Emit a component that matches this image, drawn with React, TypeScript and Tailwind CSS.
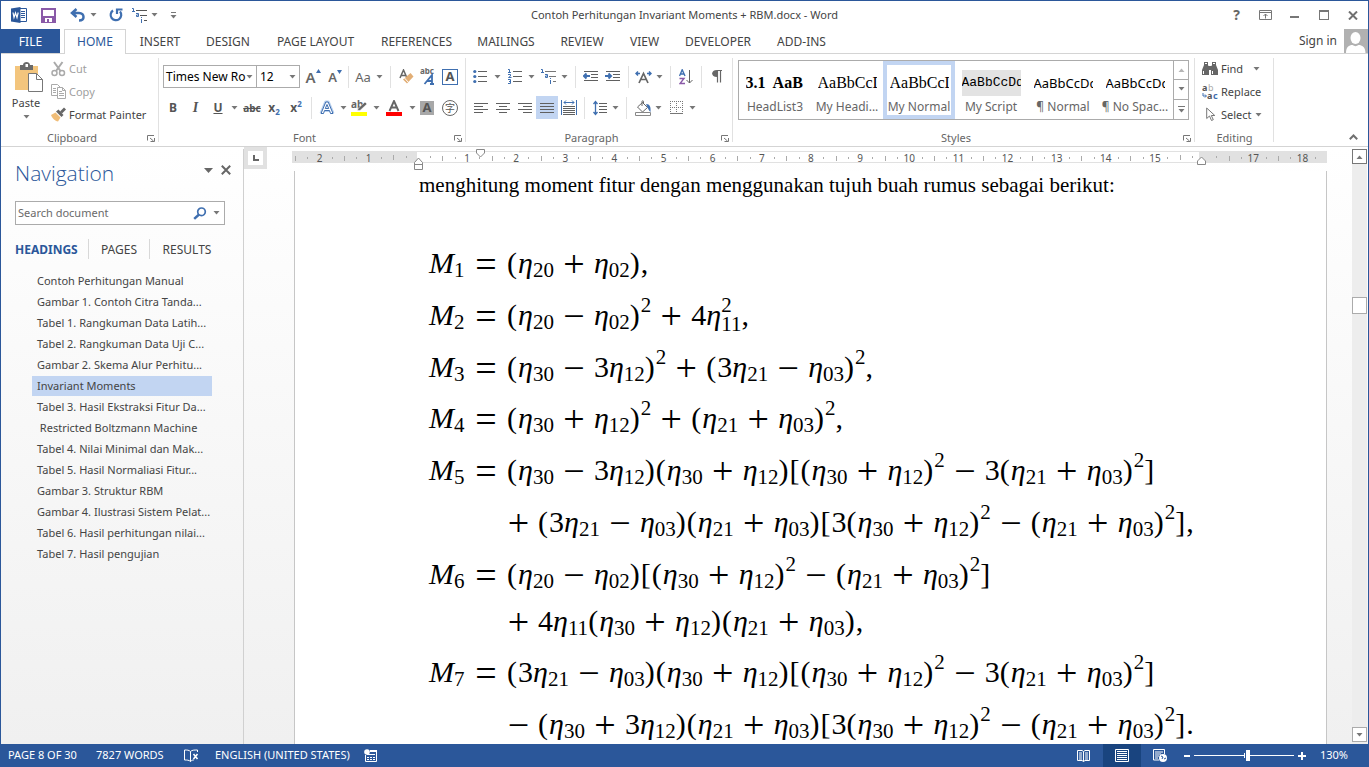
import type { ReactNode } from "react";

const INK = "#606060";
const BLUE = "#3f6fb0";

/* ---------- shared pieces ---------- */

function Caret({ light }: { light?: boolean }) {
  return (
    <svg width="7" height="4" viewBox="0 0 7 4" className="shrink-0">
      <path d="M.5 0h6L3.500 3.500z" fill={light ? "#b5b5b5" : "#777"} />
    </svg>
  );
}

function Tool({ w, label, children, on }: { w: string; label: string; children: ReactNode; on?: boolean }) {
  return (
    <button
      type="button"
      aria-label={label}
      className={`${w} flex h-[23px] shrink-0 items-center justify-center ${on ? "bg-[#c2d5f2]" : ""}`}
    >
      {children}
    </button>
  );
}

function Sep({ w }: { w: string }) {
  return (
    <div className={`${w} flex shrink-0 justify-center`}>
      <div className="h-[22px] w-px bg-[#e1e1e1]" />
    </div>
  );
}

function Launcher({ label }: { label: string }) {
  return (
    <button type="button" aria-label={label} className="absolute right-1 top-[5px]">
      <svg width="8" height="7" viewBox="0 0 8 7" fill="none" stroke="#777">
        <path d="M.5 5.500V.5H7M3 3l3.500 3M7.500 3v3.500H3.500" />
      </svg>
    </button>
  );
}

function Group({ w, label, launcher, children }: { w: string; label: string; launcher?: boolean; children: ReactNode }) {
  return (
    <section aria-label={label} className={`${w} relative flex flex-col pt-1`}>
      <div className="h-[72px]">{children}</div>
      <div className={`relative flex h-4 items-center justify-center text-[#666] ${launcher ? "pr-4" : ""}`}>
        {label}
        {launcher && <Launcher label={`${label} settings`} />}
      </div>
      <div className="absolute right-0 top-1 h-[84px] w-px bg-[#e1e1e1]" />
    </section>
  );
}

/* ---------- icons ---------- */

function Lines({ rows }: { rows: [number, number][] }) {
  return (
    <svg width="15" height="14" viewBox="0 0 15 14" stroke={INK}>
      {rows.map(([a, b], i) => (
        <path key={i} d={`M${a} ${i * 3 + 2.5}H${b}`} />
      ))}
    </svg>
  );
}

function MultiLevel({ dark }: { dark?: boolean }) {
  return (
    <svg width="17" height="17" viewBox="0 0 17 17" fill="none">
      <path d="M5 3.500h11M9 8.500h7M13 13.500h3" stroke={dark ? "#555" : "#777"} />
      <path d="M1 1.500h1.500V4M1 4.500h3M5 6.500h2.500V9.500H5.500V8H7M10.500 10v1M10.500 12v4" stroke={BLUE} />
    </svg>
  );
}

function ClipboardIcon() {
  return (
    <svg width="30" height="31" viewBox="0 0 30 31">
      <rect x="1" y="4" width="23" height="24" fill="#f3c57d" />
      <path d="M6 3h3c0-4 7-4 7 0h3v5H6z" fill="#6a6a6a" />
      <rect x="11.500" y="2" width="2.500" height="3" fill="#fff" />
      <path d="M14.500 11.500h8l6 6v12h-14z" fill="#fff" stroke="#777" />
      <path d="M22.500 11.500v6h6" fill="none" stroke="#777" />
    </svg>
  );
}

function ScissorsIcon() {
  return (
    <svg width="15" height="16" viewBox="0 0 15 16" fill="none" stroke="#aaa" strokeWidth="1.500">
      <path d="M3 1l6.500 9M11.500 1L5 10" strokeWidth="2" />
      <circle cx="3.500" cy="12" r="2.500" />
      <circle cx="11" cy="12" r="2.500" />
    </svg>
  );
}

function CopyIcon() {
  return (
    <svg width="16" height="15" viewBox="0 0 16 15" fill="#fff" stroke="#aaa">
      <path d="M.5.5h6l3 3v8h-9z" />
      <path d="M2 4.500h3M2 6.500h3M2 8.500h3" />
      <path d="M6.500 3.500h5l3 3v8h-8z" />
      <path d="M11.500 3.500v3h3M8 7.500h3M8 9.500h5M8 11.500h5" fill="none" />
    </svg>
  );
}

function BrushIcon() {
  return (
    <svg width="16" height="15" viewBox="0 0 16 15">
      <path d="M0 8l4.500-2.500 5 5L7 14.500C4 14 1 11 0 8z" fill="#f0bd78" />
      <path d="M5 4.500l2.500-2 5 5.500L10.500 10z" fill="#666" />
      <path d="M9 4.500L13 .5l2 2-4 4z" fill="#666" />
    </svg>
  );
}

function LetterIcon({ up }: { up?: boolean }) {
  return (
    <span className={`flex items-start leading-none text-[#666] ${up ? "text-[15px]" : "text-[13px]"}`}>
      <span className="pt-[2px] font-semibold">A</span>
      <svg width="5" height="4" viewBox="0 0 5 4" className="mt-px">
        <path d={up ? "M0 4h5L2.500 0z" : "M0 0h5L2.500 4z"} fill={BLUE} />
      </svg>
    </span>
  );
}

function EraserIcon() {
  return (
    <svg width="15" height="16" viewBox="0 0 15 16">
      <path d="M1 9L4.500 1 8 9M2.500 6.500h4" fill="none" stroke="#666" strokeWidth="1.500" />
      <path d="M11.500 4l3 3.500-6.500 7-4-4z" fill="#e2ae75" />
      <path d="M5.500 9l4 4.500" stroke="#fff" />
    </svg>
  );
}

function OutdentIcon({ right }: { right?: boolean }) {
  return (
    <svg width="16" height="13" viewBox="0 0 16 13" fill="none" stroke={INK}>
      <path d="M1 1.500h14M8 4.500h7M8 7.500h7M1 10.500h14" />
      <path d={right ? "M0 6h6M3.500 3.500L6 6 3.500 8.500" : "M1 6h6M3.500 3.500L1 6l2.500 2.500"} stroke={BLUE} strokeWidth="2" />
    </svg>
  );
}

/* ---------- title bar ---------- */

function TitleBar() {
  return (
    <header className="grid h-7 grid-cols-[1fr_auto_1fr] items-center">
      <div className="flex items-center pl-[10px]">
        <svg width="16" height="16" viewBox="0 0 16 16" aria-label="Word">
          <path d="M8.500 1.500h7v13h-7z" fill="#fff" stroke="#2b579a" />
          <path d="M10 4.500h4M10 6.500h4M10 8.500h4M10 10.500h4" stroke="#2b579a" />
          <path d="M0 1.500L9.500 0v16L0 14.500z" fill="#2b579a" />
          <path d="M2 5.500l1 5 1.500-4.500L6 10.500l1.200-5" fill="none" stroke="#fff" strokeWidth="1.200" />
        </svg>
        <button type="button" aria-label="Save" className="ml-[14px]">
          <svg width="15" height="15" viewBox="0 0 15 15">
            <path d="M1 1h13v13H1z" fill="#fff" stroke="#8a5aa8" strokeWidth="2" />
            <path d="M2 8h11v5H2z" fill="#8a5aa8" />
            <path d="M4 10h7v4H4z" fill="#fff" />
            <path d="M6 11h2v3H6z" fill="#8a5aa8" />
          </svg>
        </button>
        <button type="button" aria-label="Undo" className="ml-[14px] flex items-center gap-[5px]">
          <svg width="15" height="14" viewBox="0 0 15 14" fill="none" stroke={BLUE} strokeWidth="2.500">
            <path d="M6.500 1L2 5l4.500 4M2.500 5h6.500c3 0 4.500 2 4.500 4s-1.500 3.500-4.500 3.500" />
          </svg>
          <Caret />
        </button>
        <button type="button" aria-label="Redo" className="ml-3">
          <svg width="15" height="14" viewBox="0 0 15 14" fill="none" stroke={BLUE} strokeWidth="2.200">
            <path d="M4 2.500A5.300 5.300 0 1 0 11 3.500" />
            <path d="M8 6V1.500h5.500" />
          </svg>
        </button>
        <button type="button" aria-label="Multilevel list" className="ml-[7px] flex items-center gap-[3px]">
          <MultiLevel dark />
          <Caret />
        </button>
        <button type="button" aria-label="Customize toolbar" className="ml-3 flex flex-col items-center gap-[2px]">
          <span className="h-px w-[5px] bg-[#777]" />
          <Caret />
        </button>
      </div>
      <h1 className="text-[#444]">Contoh Perhitungan Invariant Moments + RBM.docx - Word</h1>
      <div className="flex items-center justify-end pr-px">
        <button type="button" aria-label="Help" className="w-[29px] text-[14px] font-bold leading-4 text-[#666]">
          ?
        </button>
        <button type="button" aria-label="Ribbon display options" className="flex w-[29px] justify-center">
          <svg width="13" height="10" viewBox="0 0 13 10" fill="none" stroke="#777">
            <path d="M.5.5h12v9H.5zM1 2.500h11M6.500 8.500V4M4.500 6l2-2 2 2" />
          </svg>
        </button>
        <button type="button" aria-label="Minimize" className="flex w-[29px] justify-center">
          <span className="mt-[3px] h-[2px] w-[9px] bg-[#777]" />
        </button>
        <button type="button" aria-label="Maximize" className="flex w-[29px] justify-center">
          <span className="h-[10px] w-[10px] border border-t-2 border-[#777]" />
        </button>
        <button type="button" aria-label="Close" className="flex w-[29px] justify-center">
          <svg width="10" height="9" viewBox="0 0 10 9" stroke="#707070" strokeWidth="2">
            <path d="M1 .5l8 8M9 .5l-8 8" />
          </svg>
        </button>
      </div>
    </header>
  );
}

/* ---------- ribbon tabs ---------- */

const TABS = [
  { name: "INSERT", w: "w-[68px]" },
  { name: "DESIGN", w: "w-[68px]" },
  { name: "PAGE LAYOUT", w: "w-[107px]" },
  { name: "REFERENCES", w: "w-[95px]" },
  { name: "MAILINGS", w: "w-[84px]" },
  { name: "REVIEW", w: "w-[68px]" },
  { name: "VIEW", w: "w-[57px]" },
  { name: "DEVELOPER", w: "w-[90px]" },
  { name: "ADD-INS", w: "w-[77px]" },
];

function TabStrip() {
  return (
    <nav className="flex h-[25px] border-b border-[#d4d4d4] text-[12px] text-[#444]">
      <button type="button" className="w-[59px] bg-[#2b579a] pt-px text-white">
        FILE
      </button>
      <button type="button" className="-mb-px ml-1 w-[62px] border border-b-0 border-[#d4d4d4] bg-white text-[#2b579a]">
        HOME
      </button>
      {TABS.map((t) => (
        <button key={t.name} type="button" className={`${t.w} whitespace-nowrap pt-px`}>
          {t.name}
        </button>
      ))}
      <div className="ml-auto flex items-center gap-[7px]">
        <a href="#signin">Sign in</a>
        <svg width="24" height="24" viewBox="0 0 24 24" aria-label="Account">
          <rect width="24" height="24" fill="#b1b1b1" />
          <ellipse cx="11.500" cy="9" rx="5" ry="6" fill="#fff" />
          <path d="M2 24c0-6 3-8 6.500-8 2 1.500 4 1.500 6 0 3.500 0 7 2 7 8z" fill="#fff" />
        </svg>
      </div>
    </nav>
  );
}

/* ---------- ribbon groups ---------- */

function ClipboardGroup() {
  return (
    <Group w="w-[158px]" label="Clipboard" launcher>
      <div className="flex">
        <button type="button" className="flex w-[50px] flex-col items-center pt-1 text-[#444]">
          <span className="pl-[5px]"><ClipboardIcon /></span>
          <span className="mt-[2px] leading-4">Paste</span>
          <span className="mt-1">
            <Caret />
          </span>
        </button>
        <div className="flex flex-col">
          <button type="button" className="flex h-[23px] items-center pb-[2px] text-[#a0a0a0]">
            <span className="w-[18px]"><ScissorsIcon /></span>Cut
          </button>
          <button type="button" className="flex h-[23px] items-center pb-[2px] text-[#a0a0a0]">
            <span className="w-[18px]"><CopyIcon /></span>Copy
          </button>
          <button type="button" className="flex h-[23px] items-center whitespace-nowrap pb-[2px] text-[#444]">
            <span className="w-[18px]"><BrushIcon /></span>Format Painter
          </button>
        </div>
      </div>
    </Group>
  );
}

function FontGroup() {
  return (
    <Group w="w-[307px]" label="Font" launcher>
      <div className="flex items-center pl-1 pt-[7px]">
        <button type="button" aria-label="Font name" className="flex h-[23px] w-[94px] items-center justify-between whitespace-nowrap border border-[#ababab] pl-[2px] pr-[3px] text-[12px] text-black">
          Times New Ro
          <Caret />
        </button>
        <button type="button" aria-label="Font size" className="-ml-px flex h-[23px] w-11 items-center justify-between border border-[#ababab] pl-[3px] pr-[3px] text-[12px] text-black">
          12
          <Caret />
        </button>
        <Tool w="w-[26px]" label="Grow font"><LetterIcon up /></Tool>
        <Tool w="w-[18px]" label="Shrink font"><LetterIcon /></Tool>
        <Sep w="w-2" />
        <Tool w="w-[22px]" label="Change case"><span className="text-[13px] text-[#666]">Aa</span></Tool>
        <Tool w="w-[10px]" label="Case options"><Caret /></Tool>
        <Sep w="w-3" />
        <Tool w="w-5" label="Clear formatting"><EraserIcon /></Tool>
        <Tool w="w-[23px]" label="Phonetic guide">
          <svg width="16" height="17" viewBox="0 0 16 17" fontFamily="Noto Sans, sans-serif">
            <text x="0" y="6" fontSize="8" fontWeight="bold" fill="#666">abc</text>
            <path d="M4.500 16L12 7v9M7 13h5M10 16h4" fill="none" stroke={BLUE} strokeWidth="1.800" />
          </svg>
        </Tool>
        <Tool w="w-[22px]" label="Character border">
          <span className="flex h-4 w-4 items-center justify-center border border-[#3f6fb0] text-[13px] font-bold leading-none text-[#555]">A</span>
        </Tool>
      </div>
      <div className="flex items-center pl-1 pt-2 text-[12px] text-[#555]">
        <Tool w="w-5" label="Bold"><b>B</b></Tool>
        <Tool w="w-[25px]" label="Italic"><i className="font-['Liberation_Serif',serif] text-[14px] font-bold">I</i></Tool>
        <Tool w="w-5" label="Underline"><span className="font-bold underline">U</span></Tool>
        <Tool w="w-3" label="Underline options"><Caret /></Tool>
        <Tool w="w-6" label="Strikethrough"><span className="text-[10px] font-bold line-through">abc</span></Tool>
        <Tool w="w-5" label="Subscript"><b>x</b><span className="pt-2 text-[8px] font-bold text-[#3f6fb0]">2</span></Tool>
        <Tool w="w-6" label="Superscript"><b>x</b><span className="pb-2 text-[8px] font-bold text-[#3f6fb0]">2</span></Tool>
        <Sep w="w-[6px]" />
        <Tool w="w-[26px]" label="Text effects">
          <svg width="16" height="16" viewBox="0 0 16 16" fill="none" strokeLinejoin="round">
            <path d="M2.500 13.500L7 2.500h2l4.500 11M5 10h6" stroke="#b9d0ee" strokeWidth="4" />
            <path d="M2 13.500L6.800 2h2.400L14 13.500h-2.500l-1-3h-5l-1 3zM6.300 8.500h3.400L8 4.500z" stroke={BLUE} fill="#fff" />
          </svg>
        </Tool>
        <Tool w="w-[6px]" label="Effect options"><Caret /></Tool>
        <Tool w="w-[26px]" label="Highlight">
          <svg width="17" height="16" viewBox="0 0 17 16">
            <text x="0" y="8" fontSize="10" fontWeight="bold" fill="#666" fontFamily="Noto Sans, sans-serif">ab</text>
            <path d="M14 2l2 2-7 6.500H6.500L7 8.500z" fill="#666" stroke="#fff" strokeWidth=".5" />
            <rect y="12" width="16" height="4" fill="#ff0" />
          </svg>
        </Tool>
        <Tool w="w-2" label="Highlight options"><Caret /></Tool>
        <Tool w="w-7" label="Font color">
          <svg width="16" height="16" viewBox="0 0 16 16">
            <path d="M3.500 11L8 1l4.500 10M5 7.500h6" fill="none" stroke="#666" strokeWidth="1.900" />
            <rect y="12" width="16" height="4" fill="#f00" />
          </svg>
        </Tool>
        <Tool w="w-2" label="Color options"><Caret /></Tool>
        <Tool w="w-[22px]" label="Character shading">
          <span className="flex h-[14px] w-[14px] items-center justify-center bg-[#a8a8a8] text-[13px] font-bold leading-none">A</span>
        </Tool>
        <Tool w="w-6" label="Enclose characters">
          <span className="flex h-4 w-4 items-center justify-center rounded-full border border-[#666] font-['Noto_Sans_CJK_SC',sans-serif] text-[10px] leading-none">字</span>
        </Tool>
      </div>
    </Group>
  );
}

function ParagraphGroup() {
  return (
    <Group w="w-[267px]" label="Paragraph" launcher>
      <div className="flex items-center pl-1 pt-[7px]">
        <Tool w="w-5" label="Bullets">
          <svg width="14" height="15" viewBox="0 0 14 15">
            <path d="M5 2.500h9M5 7.500h9M5 12.500h9" stroke={INK} />
            <g fill={BLUE}><circle cx="1.800" cy="2.500" r="1.600" /><circle cx="1.800" cy="7.500" r="1.600" /><circle cx="1.800" cy="12.500" r="1.600" /></g>
          </svg>
        </Tool>
        <Tool w="w-[14px]" label="Bullet options"><Caret /></Tool>
        <Tool w="w-[22px]" label="Numbering">
          <svg width="15" height="17" viewBox="0 0 15 17" fill="none">
            <path d="M5 3.500h9M5 8.500h9M5 13.500h9" stroke={INK} />
            <path d="M0 1.500h1.500V4M0 4.500h3M0 6.500h2.500v1.500l-2 1.500h3M0 11.500h2.500v4H0M1 13.500h1.500" stroke={BLUE} />
          </svg>
        </Tool>
        <Tool w="w-[10px]" label="Numbering options"><Caret /></Tool>
        <Tool w="w-6" label="Multilevel list"><MultiLevel /></Tool>
        <Tool w="w-2" label="Multilevel options"><Caret /></Tool>
        <Sep w="w-[14px]" />
        <Tool w="w-[18px]" label="Decrease indent"><OutdentIcon /></Tool>
        <Tool w="w-[26px]" label="Increase indent"><OutdentIcon right /></Tool>
        <Sep w="w-1" />
        <Tool w="w-[26px]" label="Asian layout">
          <svg width="17" height="14" viewBox="0 0 17 14" fill="none">
            <path d="M4 13L8.500 3.500 13 13M5.500 9.500h6" stroke="#666" strokeWidth="1.700" />
            <path d="M1 3.500h4M3 1.500l-2 2 2 2M16 3.500h-4M14 1.500l2 2-2 2" stroke={BLUE} strokeWidth="1.500" />
          </svg>
        </Tool>
        <Tool w="w-[6px]" label="Asian layout options"><Caret /></Tool>
        <Sep w="w-4" />
        <Tool w="w-4" label="Sort">
          <svg width="14" height="16" viewBox="0 0 14 16" fill="none">
            <path d="M.5 7L3.200.8 6 7M1.500 5h3.500" stroke={BLUE} strokeWidth="1.400" />
            <path d="M.5 9.500h4.500L1 14.500h5" stroke="#8a5aa8" strokeWidth="1.400" />
            <path d="M10.500 1v13M7.500 11l3 3 3-3" stroke={INK} />
          </svg>
        </Tool>
        <Sep w="w-[14px]" />
        <Tool w="w-[18px]" label="Show marks">
          <svg width="10" height="13" viewBox="0 0 10 13">
            <path d="M5 .5H10M5.500 0v12.500M8.500 0v12.500" stroke="#666" strokeWidth="1.200" />
            <path d="M5 0v7C-1.500 7-1.500 0 5 0z" fill="#666" />
          </svg>
        </Tool>
      </div>
      <div className="flex items-center pl-1 pt-2">
        <Tool w="w-[22px]" label="Align left"><Lines rows={[[0, 14], [0, 9], [0, 14], [0, 9]]} /></Tool>
        <Tool w="w-[22px]" label="Center"><Lines rows={[[0, 14], [3, 11], [0, 14], [3, 11]]} /></Tool>
        <Tool w="w-[22px]" label="Align right"><Lines rows={[[0, 14], [5, 14], [0, 14], [5, 14]]} /></Tool>
        <Tool w="w-[22px]" label="Justify" on><Lines rows={[[0, 14], [0, 14], [0, 14], [0, 14]]} /></Tool>
        <Tool w="w-[22px]" label="Distributed">
          <svg width="16" height="15" viewBox="0 0 16 15" fill="none">
            <path d="M.5 0v15M15.500 0v15M3 2.500h10M5 .5l-2 2 2 2M11 .5l2 2-2 2" stroke={BLUE} />
            <path d="M2 6.500h12M2 8.500h12M2 10.500h12M2 12.500h12M2 14.500h12" stroke={INK} />
          </svg>
        </Tool>
        <Sep w="w-2" />
        <Tool w="w-6" label="Line spacing">
          <svg width="15" height="16" viewBox="0 0 15 16" fill="none">
            <path d="M2.500 1.500v13M.5 4l2-2.500 2 2.500M.5 12l2 2.500 2-2.500" stroke={BLUE} strokeWidth="1.300" />
            <path d="M6 3.500h8M6 6.500h8M6 9.500h8M6 12.500h8" stroke={INK} />
          </svg>
        </Tool>
        <Tool w="w-[6px]" label="Spacing options"><Caret /></Tool>
        <Sep w="w-4" />
        <Tool w="w-[18px]" label="Shading">
          <svg width="17" height="16" viewBox="0 0 17 16" fill="none">
            <path d="M7.500 2.500l5 5-5 4.500-5-5zM7 6V1.500c0-1 1.500-1 1.500 0V4" stroke="#666" fill="#fff" />
            <path d="M11 4c4 0 5 3 4.500 8-1.500-1-2-3-3-4.500z" fill={BLUE} />
            <path d="M.5 12.500h15v3H.5z" fill="#fff" stroke="#888" />
          </svg>
        </Tool>
        <Tool w="w-3" label="Shading options"><Caret /></Tool>
        <Tool w="w-6" label="Borders">
          <svg width="13" height="13" viewBox="0 0 13 13" stroke="#777" fill="none">
            <path d="M0 .5h13M0 6.500h13M.5 0v12M6.500 0v12M12.500 0v12" strokeDasharray="1 1" />
            <path d="M0 12.500h13" />
          </svg>
        </Tool>
        <Tool w="w-2" label="Border options"><Caret /></Tool>
      </div>
    </Group>
  );
}

const STYLES = [
  { name: "HeadList3", sample: "3.1  AaB", cls: "font-['Liberation_Serif',serif] text-[16px] font-bold" },
  { name: "My Headi...", sample: "AaBbCcD", cls: "font-['Liberation_Serif',serif] text-[16px]" },
  { name: "My Normal", sample: "AaBbCcD", cls: "font-['Liberation_Serif',serif] text-[16px]", on: true },
  { name: "My Script", sample: "AaBbCcDd", cls: "font-['Liberation_Mono'] text-[13px] bg-[#e3e3e3]" },
  { name: "¶ Normal", sample: "AaBbCcDd", cls: "text-[13px]" },
  { name: "¶ No Spac...", sample: "AaBbCcDd", cls: "text-[13px]" },
];

function StylesGroup() {
  return (
    <Group w="w-[462px]" label="Styles" launcher>
      <div className="ml-[5px] mr-[6px] mt-[2px] flex h-[60px] border border-[#ababab]">
        {STYLES.map((s) => (
          <button
            key={s.name}
            type="button"
            className={`flex w-[72px] shrink-0 flex-col items-center justify-start border-4 ${s.on ? "border-[#c2d5f2]" : "border-transparent"}`}
          >
            <span className={`mt-[5px] h-[26px] w-[59px] shrink-0 overflow-hidden whitespace-pre text-left leading-[26px] text-black ${s.cls}`}>{s.sample}</span>
            <span className="mt-[3px] whitespace-nowrap text-[12px] leading-4 text-[#666]">{s.name}</span>
          </button>
        ))}
        <div className="ml-auto grid w-[15px] grid-rows-3 divide-y divide-[#ababab] border-l border-[#ababab]">
          <button type="button" aria-label="Previous styles" className="flex items-center justify-center"><span className="rotate-180"><Caret light /></span></button>
          <button type="button" aria-label="Next styles" className="flex items-center justify-center"><Caret /></button>
          <button type="button" aria-label="More styles" className="flex flex-col items-center justify-center gap-[2px]">
            <span className="h-px w-[7px] bg-[#777]" />
            <Caret />
          </button>
        </div>
      </div>
    </Group>
  );
}

function EditingGroup() {
  return (
    <Group w="w-[79px]" label="Editing">
      <div className="flex flex-col pl-[7px] text-[#444]">
        <button type="button" className="flex h-[23px] items-center pb-[2px]">
          <span className="w-[19px]">
            <svg width="16" height="14" viewBox="0 0 16 14" fill="#666">
              <path d="M2 3V0h4v3l1 2v8H0V8zM10 3V0h4v3l2 5v5H9V5zM6.500 4h3v4h-3z" />
              <path d="M1.500 9v3M10.500 9v3M3 1.500h2M11 1.500h2" stroke="#fff" />
            </svg>
          </span>
          Find
          <span className="ml-[10px]"><Caret /></span>
        </button>
        <button type="button" className="flex h-[23px] items-center pb-[2px]">
          <span className="w-[19px]">
            <svg width="17" height="16" viewBox="0 0 17 16" fontFamily="Noto Sans, sans-serif" fontSize="9">
              <text x="0" y="7" fill="#555" fontWeight="bold">a</text>
              <text x="6" y="7" fill="#aaa">b</text>
              <text x="5" y="15" fill="#555" fontWeight="bold">a</text>
              <text x="11" y="15" fill={BLUE} fontWeight="bold">c</text>
              <path d="M1 9v3h3M3 10.500L4.500 12 3 13.500" fill="none" stroke={BLUE} />
            </svg>
          </span>
          Replace
        </button>
        <button type="button" className="flex h-[23px] items-center pb-[2px]">
          <span className="w-[19px] pl-1">
            <svg width="10" height="15" viewBox="0 0 10 15" fill="#fff" stroke="#777">
              <path d="M.7 1v10.500L3.500 9l2 4.500 1.800-.8-2-4.200h3.500z" />
            </svg>
          </span>
          Select
          <span className="ml-[3px]"><Caret /></span>
        </button>
      </div>
    </Group>
  );
}

function Ribbon() {
  return (
    <div className="flex h-[93px] shrink-0 border-b border-[#d4d4d4]">
      <ClipboardGroup />
      <FontGroup />
      <ParagraphGroup />
      <StylesGroup />
      <EditingGroup />
      <button type="button" aria-label="Collapse ribbon" className="mb-1 ml-auto mr-[10px] flex items-end pb-[2px]">
        <svg width="9" height="6" viewBox="0 0 9 6" fill="none" stroke="#707070" strokeWidth="2">
          <path d="M.8 5.200L4.500 1.500l3.700 3.700" />
        </svg>
      </button>
    </div>
  );
}

/* ---------- navigation pane ---------- */

const HEADINGS = [
  "Contoh Perhitungan Manual",
  "Gambar 1. Contoh Citra Tanda...",
  "Tabel 1. Rangkuman Data Latih...",
  "Tabel 2. Rangkuman Data Uji C...",
  "Gambar 2. Skema Alur Perhitu...",
  "Invariant Moments",
  "Tabel 3. Hasil Ekstraksi Fitur Da...",
  " Restricted Boltzmann Machine",
  "Tabel 4. Nilai Minimal dan Mak...",
  "Tabel 5. Hasil Normaliasi Fitur...",
  "Gambar 3. Struktur RBM",
  "Gambar 4. Ilustrasi Sistem Pelat...",
  "Tabel 6. Hasil perhitungan nilai...",
  "Tabel 7. Hasil pengujian",
];

function NavigationPane() {
  return (
    <aside className="mt-[2px] flex w-[243px] shrink-0 flex-col border-r border-[#d0d0d0] text-[#444]">
      <div className="flex items-center pl-[14px] pr-3 pt-2">
        <h2 className="font-['Open_Sans',sans-serif] text-[21px] font-light leading-8 text-[#2b579a]">Navigation</h2>
        <button type="button" aria-label="Pane options" className="mb-[6px] ml-auto">
          <svg width="9" height="5" viewBox="0 0 9 5"><path d="M0 0h9L4.500 5z" fill="#666" /></svg>
        </button>
        <button type="button" aria-label="Close pane" className="mb-[6px] ml-2">
          <svg width="10" height="10" viewBox="0 0 10 10" stroke="#666" strokeWidth="2"><path d="M.8.8l8.400 8.400M9.200.8L.8 9.200" /></svg>
        </button>
      </div>
      <div className="ml-[14px] mt-3 flex h-6 w-[210px] items-center border border-[#ababab] bg-white pl-[2px] pr-1">
        <input aria-label="Search document" placeholder="Search document" className="min-w-0 flex-1 outline-none placeholder:text-[#6a6a6a]" />
        <button type="button" aria-label="Search">
          <svg width="14" height="13" viewBox="0 0 14 13" fill="none" stroke={BLUE}>
            <circle cx="8.500" cy="4.800" r="3.800" strokeWidth="1.700" />
            <path d="M6 7.500L1.200 11.800" strokeWidth="2.400" />
          </svg>
        </button>
        <button type="button" aria-label="Search options" className="ml-[6px]"><Caret /></button>
      </div>
      <div className="mt-[14px] flex h-5 items-center text-[12px]">
        <button type="button" className="h-5 w-[87px] pt-px text-left font-bold text-[#2b579a]"><span className="pl-[14px]">HEADINGS</span></button>
        <button type="button" className="h-5 w-[61px] border-l border-[#d8d8d8] pt-px">PAGES</button>
        <button type="button" className="h-5 w-[75px] border-l border-[#d8d8d8] pt-px">RESULTS</button>
      </div>
      <ul className="mt-3 pl-[31px] pr-[31px]">
        {HEADINGS.map((h) => (
          <li key={h} className={`mb-px h-5 whitespace-pre pl-[5px] leading-5 ${h === "Invariant Moments" ? "bg-[#c2d5f2]" : ""}`}>
            <a href="#heading">{h}</a>
          </li>
        ))}
      </ul>
    </aside>
  );
}

/* ---------- ruler ---------- */

const RULER = ["2", "1", "", "1", "2", "3", "4", "5", "6", "7", "8", "9", "10", "11", "12", "13", "14", "15", "", "17", "18"];

function rulerShade(i: number) {
  if (i < 2 || i > 18) return "bg-[#e1e1e1]";
  if (i === 2) return "bg-[linear-gradient(90deg,#e1e1e1_50%,#fff_50%)]";
  if (i === 18) return "bg-[linear-gradient(90deg,#fff_38%,#e1e1e1_38%)]";
  return "bg-white";
}

function Ruler() {
  return (
    <div className="relative ml-[25px] mr-[25px] mt-1 flex h-3 flex-1 bg-[#e1e1e1] pl-[3px] text-[10px] leading-3 text-[#555]">
      {RULER.map((n, i) => (
        <div key={i} className={`grid flex-1 grid-cols-4 items-center border-y border-[#e1e1e1] ${rulerShade(i)}`}>
          <span className="h-[5px] w-px bg-[#aaa]" />
          <span className="h-[2px] w-px bg-[#aaa]" />
          <span className="flex w-0 justify-center">{n}</span>
          <span className="h-[2px] w-px bg-[#aaa]" />
        </div>
      ))}
      <svg width="11" height="14" viewBox="0 0 11 14" className="absolute left-[121px] top-[6px]" fill="#fff" stroke="#888">
        <path d="M1.500 12.500v-7l4-4.500 4 4.500v7zM1.500 7.500h8" />
      </svg>
      <svg width="11" height="9" viewBox="0 0 11 9" className="absolute left-[183px] top-[-2px]" fill="#fff" stroke="#888">
        <path d="M1.500.5h8V4l-4 4-4-4z" />
      </svg>
      <svg width="11" height="9" viewBox="0 0 11 9" className="absolute right-[120px] top-[5px]" fill="#fff" stroke="#888">
        <path d="M1.500 8.500V5l4-4 4 4v3.500z" />
      </svg>
    </div>
  );
}

/* ---------- document ---------- */

/* Formula source: h = eta, _NN = subscript, ^ = squared, stacked pair written as "^_". */
const FORMULAS = [
  { n: "1", f: "(h_20+h_02),", h: "h-[52px]" },
  { n: "2", f: "(h_20-h_02)^+4h^_11,", h: "h-[52px]" },
  { n: "3", f: "(h_30-3h_12)^+(3h_21-h_03)^,", h: "h-[51px]" },
  { n: "4", f: "(h_30+h_12)^+(h_21+h_03)^,", h: "h-[52px]" },
  { n: "5", f: "(h_30-3h_12)(h_30+h_12)[(h_30+h_12)^-3(h_21+h_03)^]", h: "h-[52px]" },
  { n: "", f: "+(3h_21-h_03)(h_21+h_03)[3(h_30+h_12)^-(h_21+h_03)^],", h: "h-[52px]" },
  { n: "6", f: "(h_20-h_02)[(h_30+h_12)^-(h_21+h_03)^]", h: "h-[47px]" },
  { n: "", f: "+4h_11(h_30+h_12)(h_21+h_03),", h: "h-[51px]" },
  { n: "7", f: "(3h_21-h_03)(h_30+h_12)[(h_30+h_12)^-3(h_21+h_03)^]", h: "h-[52px]" },
  { n: "", f: "-(h_30+3h_12)(h_21+h_03)[3(h_30+h_12)^-(h_21+h_03)^].", h: "h-[52px]" },
];

function Formula({ source }: { source: string }) {
  const tokens = source.match(/_\d\d|\^_\d\d|./g) ?? [];
  return (
    <>
      {tokens.map((t, i) => {
        if (t === "h") return <i key={i}>η</i>;
        if (t.startsWith("^_"))
          return (
            <span key={i}>
              <span className="inline-block w-0 align-[13px] text-[21px] leading-none">2</span>
              <span className="align-[-6px] text-[21px] leading-none">{t.slice(2)}</span>
            </span>
          );
        if (t.startsWith("_")) return <span key={i} className="align-[-4px] text-[21px] leading-none">{t.slice(1)}</span>;
        if (t === "^") return <span key={i} className="align-[13px] text-[21px] leading-none">2</span>;
        if (t === "+" || t === "-")
          return (
            <span key={i} className={`inline-block text-center align-[-4px] text-[38px] leading-none ${i === 0 ? "w-[31px] pr-2" : "w-10"}`}>
              {t === "+" ? "+" : "−"}
            </span>
          );
        return <span key={i} className={/[()[\]]/.test(t) ? "pr-px" : ""}>{t}</span>;
      })}
    </>
  );
}

function Page() {
  return (
    <article className="ml-[50px] mr-[25px] mt-[2px] min-h-0 flex-1 overflow-hidden border-x border-[#c6c6c6] bg-white pl-[124px] font-['Liberation_Serif',serif] text-black">
      <p className="whitespace-nowrap text-[21px] leading-7">
        menghitung moment fitur dengan menggunakan tujuh buah rumus sebagai berikut:
      </p>
      <div className="pl-[10px] pt-[38px] text-[30px]">
        {FORMULAS.map((row, i) => (
          <div key={i} className={`${row.h} flex whitespace-nowrap leading-[52px]`}>
            <div className="flex w-[78px] shrink-0">
              {row.n && (
                <>
                  <span className="w-[37px]">
                    <i>M</i>
                    <span className="align-[-4px] text-[21px] leading-none">{row.n}</span>
                  </span>
                  <span className="w-10 text-center"><span className="align-[-4px] text-[38px] leading-none">=</span></span>
                </>
              )}
            </div>
            <div><Formula source={row.f} /></div>
          </div>
        ))}
      </div>
    </article>
  );
}

function ScrollBar() {
  return (
    <div className="mt-[2px] flex w-[15px] shrink-0 flex-col bg-[#ededed]">
      <button type="button" aria-label="Scroll up" className="flex h-[15px] items-center justify-center border border-[#777] bg-white">
        <span className="rotate-180"><Caret /></span>
      </button>
      <div className="flex min-h-0 flex-1 flex-col">
        <div className="h-[133px] shrink-0" />
        <div className="h-[17px] shrink-0 border border-[#ababab] bg-white" />
      </div>
      <button type="button" aria-label="Scroll down" className="mb-[2px] flex h-[15px] items-center justify-center border border-[#ababab] bg-white">
        <Caret />
      </button>
    </div>
  );
}

/* ---------- status bar ---------- */

function StatusBar() {
  return (
    <footer className="flex h-[23px] shrink-0 items-center bg-[#2b579a] pl-[7px] text-white">
      <span className="w-[88px] pb-px">PAGE 8 OF 30</span>
      <span className="w-[88px] pb-px">7827 WORDS</span>
      <button type="button" aria-label="Proofing" className="w-[31px]">
        <svg width="15" height="14" viewBox="0 0 15 14" fill="none" stroke="#fff">
          <path d="M6.500 2.500C5 1 3 1 .5 1v10c2.500 0 4.500 0 6 1.500zM6.500 2.500C8 1 10 1 13.500 1v2M6.500 12.500C8 11 9 11 10 11" />
          <path d="M9.500 5l4 5M13.500 5l-4 5" strokeWidth="1.600" />
        </svg>
      </button>
      <span className="w-[149px] whitespace-nowrap pb-px">ENGLISH (UNITED STATES)</span>
      <button type="button" aria-label="Record macro">
        <svg width="14" height="13" viewBox="0 0 14 13" fill="none" stroke="#fff">
          <path d="M6 2h7" strokeWidth="2" />
          <path d="M12.500 1v11.500M1.500 6v6.500h11M3 5.500h8M3 8.500h2M6 8.500h2M9 8.500h2M3 10.500h2M6 10.500h2M9 10.500h2" />
          <circle cx="3" cy="3" r="2.800" fill="#fff" stroke="none" />
        </svg>
      </button>
      <div className="ml-auto flex h-full items-center pr-5">
        <button type="button" aria-label="Read mode" className="flex w-[39px] justify-center">
          <svg width="13" height="12" viewBox="0 0 13 12" fill="none" stroke="#fff">
            <path d="M6.500 1.500v10M.5.500h4.500l1.500 1L8 .5h4.500v10H8l-1.500 1-1.500-1H.5zM2 3h3M2 5h3M2 7h3M2 9h3M8 3h3M8 5h3M8 7h3M8 9h3" />
          </svg>
        </button>
        <button type="button" aria-label="Print layout" className="flex h-full w-[38px] items-center justify-center bg-[#19447f]">
          <svg width="14" height="13" viewBox="0 0 14 13" fill="none" stroke="#fff">
            <path d="M.5.5h13v12H.5zM2 2.500h10M2 4.500h10M2 6.500h10M2 8.500h10M2 10.500h10" />
          </svg>
        </button>
        <button type="button" aria-label="Web layout" className="flex w-[38px] justify-center">
          <svg width="15" height="14" viewBox="0 0 15 14" fill="none" stroke="#fff">
            <path d="M6 11H.5V.5h11V5M2 3h8M2 5h6M2 7h4M2 9h3" />
            <circle cx="10" cy="9" r="4" fill="#fff" stroke="none" />
            <path d="M8 7l2 1-1 2M11 10l2-1" stroke="#2b579a" />
          </svg>
        </button>
        <button type="button" aria-label="Zoom out" className="ml-[5px] h-[2px] w-[6px] bg-white" />
        <div role="img" aria-label="Zoom level" className="mx-1 flex h-3 w-[100px] items-center">
          <span className="h-px w-[50px] bg-white" />
          <span className="h-[5px] w-px bg-white" />
          <span className="ml-px h-[11px] w-1 bg-white" />
          <span className="h-px flex-1 bg-white" />
        </div>
        <button type="button" aria-label="Zoom in">
          <svg width="8" height="8" viewBox="0 0 8 8" stroke="#fff" strokeWidth="2"><path d="M4 0v8M0 4h8" /></svg>
        </button>
        <span className="w-[42px] pb-px text-right">130%</span>
      </div>
    </footer>
  );
}

export default function App() {
  return (
    <div className="flex h-screen flex-col overflow-hidden border-x border-t border-[#2b579a] bg-white font-['Noto_Sans',sans-serif] text-[11px] leading-4">
      <TitleBar />
      <TabStrip />
      <Ribbon />
      <main className="flex min-h-0 flex-1 bg-linear-to-b from-white to-[#f0f0f0] pr-px">
        <NavigationPane />
        <div className="flex min-w-0 flex-1 flex-col">
          <div className="flex h-[22px] shrink-0">
            <button type="button" aria-label="Tab selector" className="flex h-[22px] w-[23px] items-center justify-center border-4 border-[#e1e1e1] bg-white">
              <span className="h-[6px] w-[6px] border-b-2 border-l-2 border-[#666]" />
            </button>
            <Ruler />
          </div>
          <Page />
        </div>
        <ScrollBar />
      </main>
      <StatusBar />
    </div>
  );
}
